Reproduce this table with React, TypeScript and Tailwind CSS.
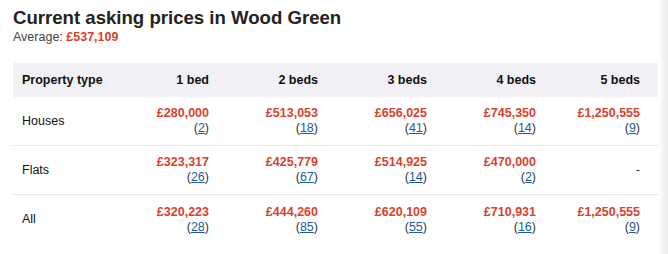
const columns = ["1 bed", "2 beds", "3 beds", "4 beds", "5 beds"];

type Cell = { price: string; count: string } | null;

const rows: { label: string; cells: Cell[] }[] = [
  {
    label: "Houses",
    cells: [
      { price: "£280,000", count: "2" },
      { price: "£513,053", count: "18" },
      { price: "£656,025", count: "41" },
      { price: "£745,350", count: "14" },
      { price: "£1,250,555", count: "9" },
    ],
  },
  {
    label: "Flats",
    cells: [
      { price: "£323,317", count: "26" },
      { price: "£425,779", count: "67" },
      { price: "£514,925", count: "14" },
      { price: "£470,000", count: "2" },
      null,
    ],
  },
  {
    label: "All",
    cells: [
      { price: "£320,223", count: "28" },
      { price: "£444,260", count: "85" },
      { price: "£620,109", count: "55" },
      { price: "£710,931", count: "16" },
      { price: "£1,250,555", count: "9" },
    ],
  },
];

const grid = "grid grid-cols-[105px_109px_109px_109px_109px_104px]";

const App = () => {
  return (
    <div className="flex w-[668px] h-[254px] bg-white font-['Liberation_Sans',Arial,sans-serif] text-[#222]">
      <div className="w-[660px] pl-[13px] pr-[2px] pt-[6px]">
        {/* Heading */}
        <h2 className="text-[18.6px] leading-[24px] font-bold text-[#222]">
          Current asking prices in Wood Green
        </h2>
        <p className="text-[12.5px] leading-[15px] text-[#444]">
          Average: <span className="font-bold text-[#d9412d]">£537,109</span>
        </p>

        {/* Table */}
        <div className="mt-[18px] w-[645px]">
          <div className={`${grid} h-[34px] items-center bg-[#f0f0f5] text-[12.5px] font-bold text-[#111]`}>
            <div className="pl-[9px]">Property type</div>
            {columns.map((c) => (
              <div key={c} className="pr-[18px] text-right">
                {c}
              </div>
            ))}
          </div>

          {rows.map((row, i) => (
            <div
              key={row.label}
              className={`${grid} h-[49px] items-center text-[12.5px] ${
                i < rows.length - 1 ? "border-b border-[#e6e6e6]" : ""
              }`}
            >
              <div className="pl-[9px] text-[#111]">{row.label}</div>
              {row.cells.map((cell, j) => (
                <div key={j} className="pr-[18px] text-right leading-[15px]">
                  {cell ? (
                    <>
                      <div className="font-bold text-[#d9412d]">{cell.price}</div>
                      <div className="text-[#333]">
                        (<a href="#" className="text-[#1d5ba4] underline">{cell.count}</a>)
                      </div>
                    </>
                  ) : (
                    <div className="text-[#333]">-</div>
                  )}
                </div>
              ))}
            </div>
          ))}
        </div>
      </div>
      {/* scrollbar strip */}
      <div className="flex-1 bg-gradient-to-r from-[#fafafa] to-[#ececec]" />
    </div>
  );
};

export default App;
